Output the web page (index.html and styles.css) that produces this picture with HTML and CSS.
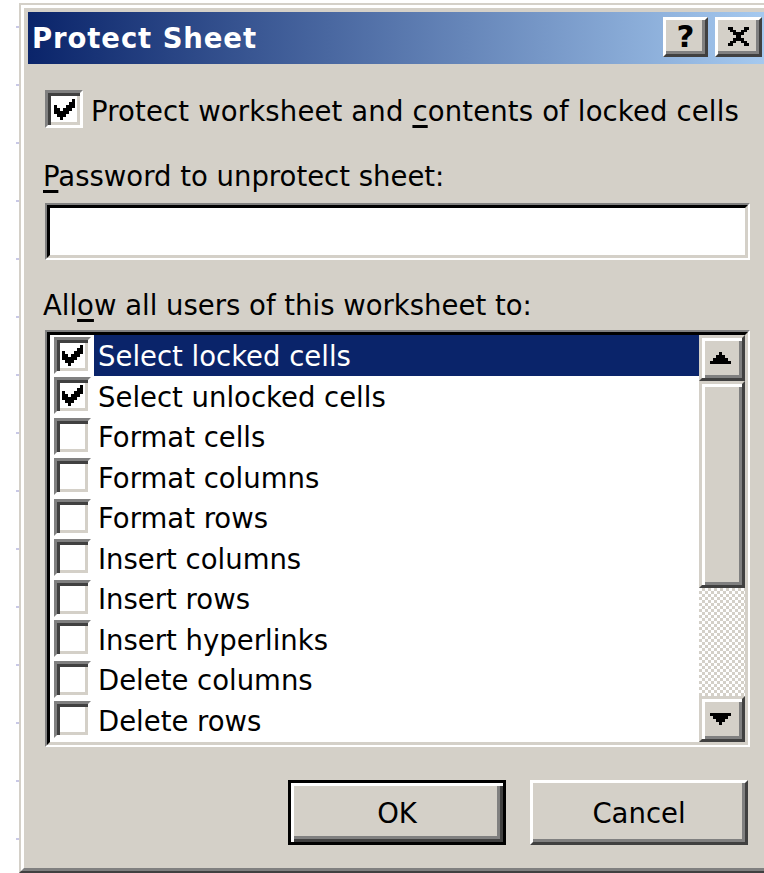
FILE: index.html
```html
<!DOCTYPE html>
<html lang="en">
<head>
<meta charset="utf-8">
<title>Protect Sheet</title>
<link rel="stylesheet" href="styles.css">
</head>
<body>
<div class="gutter"></div>
<div class="dialog">
  <div class="frame">
    <div class="titlebar">
      <span class="title">Protect Sheet</span>
      <div class="caption-buttons">
        <button class="cap-btn help" type="button">?</button>
        <button class="cap-btn close" type="button" aria-label="Close">
          <svg width="23" height="19" viewBox="0 0 8 7" shape-rendering="crispEdges"><path d="M0 0h2v1H0zM6 0h2v1H6zM1 1h2v1H1zM5 1h2v1H5zM2 2h4v1H2zM3 3h2v1H3zM2 4h4v1H2zM1 5h2v1H1zM5 5h2v1H5zM0 6h2v1H0zM6 6h2v1H6z" fill="#000"/></svg>
        </button>
      </div>
    </div>

    <div class="content">
      <div class="check-row">
        <span class="checkbox big">
          <svg class="tick" viewBox="0 0 7 7" shape-rendering="crispEdges"><path d="M6 0h1v1H6zM5 1h2v1H5zM0 2h1v1H0zM4 2h3v1H4zM0 3h2v1H0zM3 3h3v1H3zM0 4h5v1H0zM1 5h3v1H1zM2 6h1v1H2z" fill="#000"/></svg>
        </span>
        <span class="check-label">Protect worksheet and <u>c</u>ontents of locked cells</span>
      </div>

      <div class="field-label password-label"><u>P</u>assword to unprotect sheet:</div>
      <div class="sunken textbox"><div class="sunken-inner"></div></div>

      <div class="field-label allow-label">All<u>o</u>w all users of this worksheet to:</div>
      <div class="sunken listbox">
        <div class="sunken-inner list-inner">
          <ul class="items">
            <li class="item selected"><span class="checkbox small"><svg class="tick" viewBox="0 0 7 7" shape-rendering="crispEdges"><path d="M6 0h1v1H6zM5 1h2v1H5zM0 2h1v1H0zM4 2h3v1H4zM0 3h2v1H0zM3 3h3v1H3zM0 4h5v1H0zM1 5h3v1H1zM2 6h1v1H2z" fill="#000"/></svg></span><span class="item-label">Select locked cells</span></li>
            <li class="item"><span class="checkbox small"><svg class="tick" viewBox="0 0 7 7" shape-rendering="crispEdges"><path d="M6 0h1v1H6zM5 1h2v1H5zM0 2h1v1H0zM4 2h3v1H4zM0 3h2v1H0zM3 3h3v1H3zM0 4h5v1H0zM1 5h3v1H1zM2 6h1v1H2z" fill="#000"/></svg></span><span class="item-label">Select unlocked cells</span></li>
            <li class="item"><span class="checkbox small"></span><span class="item-label">Format cells</span></li>
            <li class="item"><span class="checkbox small"></span><span class="item-label">Format columns</span></li>
            <li class="item"><span class="checkbox small"></span><span class="item-label">Format rows</span></li>
            <li class="item"><span class="checkbox small"></span><span class="item-label">Insert columns</span></li>
            <li class="item"><span class="checkbox small"></span><span class="item-label">Insert rows</span></li>
            <li class="item"><span class="checkbox small"></span><span class="item-label">Insert hyperlinks</span></li>
            <li class="item"><span class="checkbox small"></span><span class="item-label">Delete columns</span></li>
            <li class="item"><span class="checkbox small"></span><span class="item-label">Delete rows</span></li>
          </ul>
          <div class="scrollbar">
            <div class="raised sb-btn">
              <svg width="21" height="12" viewBox="0 0 7 4" shape-rendering="crispEdges"><path d="M3 0h1v1H3zM2 1h3v1H2zM1 2h5v1H1zM0 3h7v1H0z" fill="#000"/></svg>
            </div>
            <div class="raised sb-thumb"></div>
            <div class="sb-track"></div>
            <div class="raised sb-btn">
              <svg width="21" height="12" viewBox="0 0 7 4" shape-rendering="crispEdges"><path d="M0 0h7v1H0zM1 1h5v1H1zM2 2h3v1H2zM3 3h1v1H3z" fill="#000"/></svg>
            </div>
          </div>
        </div>
      </div>

      <div class="actions">
        <button class="btn default" type="button">OK</button>
        <button class="btn" type="button">Cancel</button>
      </div>
    </div>
  </div>
</div>
</body>
</html>
```

FILE: styles.css
```css
html, body {
  margin: 0;
  padding: 0;
  height: 100%;
  overflow: hidden;
  background: #fff;
}

body {
  display: flex;
  align-items: flex-start;
  font-family: "DejaVu Sans", "Noto Sans", sans-serif;
  font-size: 27.5px;
  color: #000;
}

/* faint grid ticks of the sheet behind the dialog */
.gutter {
  flex: none;
  width: 19px;
  align-self: stretch;
  background: linear-gradient(to bottom, transparent 26px, #c9c9e6 26px, #c9c9e6 28px, transparent 28px) 16px 0 / 3px 58px repeat-y;
}

.dialog {
  flex: none;
  width: 758px;
  margin-top: 3px;
  box-sizing: border-box;
  border: 2px solid;
  border-color: #d4d0c8 #404040 #404040 #d4d0c8;
  background: #d4d0c8;
}

.frame {
  border: 3px solid;
  border-color: #fff #808080 #808080 #fff;
  padding: 4px;
}

/* caption */
.titlebar {
  height: 52px;
  display: flex;
  justify-content: space-between;
  align-items: flex-start;
  background: linear-gradient(to right, #0a246a, #a6caf0);
}

.title {
  color: #fff;
  font-weight: bold;
  line-height: 52px;
  padding-left: 4px;
  letter-spacing: 0.9px;
  white-space: nowrap;
}

.caption-buttons {
  display: flex;
  gap: 7px;
  margin-top: 5px;
  margin-right: 6px;
}

.cap-btn {
  height: 40px;
  box-sizing: border-box;
  padding: 0;
  border: 3px solid;
  border-color: #fff #404040 #404040 #fff;
  box-shadow: inset -3px -3px 0 #808080;
  background: #d4d0c8;
  display: flex;
  align-items: center;
  justify-content: center;
  color: #000;
}

.cap-btn.help {
  width: 45px;
  font: bold 31px "DejaVu Sans", sans-serif;
  line-height: 1;
  padding-bottom: 2px;
}

.cap-btn.close {
  width: 47px;
  padding-bottom: 2px;
}

/* body */
.content {
  padding: 26px 18px 19px 17px;
}

.check-row {
  display: flex;
  align-items: flex-start;
  gap: 8px;
  height: 38px;
}

.check-label {
  line-height: 38px;
  padding-top: 2px;
  letter-spacing: 0.15px;
  white-space: nowrap;
}

u {
  text-decoration-thickness: 3px;
  text-underline-offset: 4px;
}

.checkbox {
  flex: none;
  box-sizing: border-box;
  border: 3px solid;
  border-color: #808080 #fff #fff #808080;
  box-shadow: inset 3px 3px 0 #404040, inset -3px -3px 0 #d4d0c8;
  background: #fff;
  display: flex;
  align-items: center;
  justify-content: center;
}

.checkbox.big {
  width: 38px;
  height: 38px;
}

.checkbox.small {
  width: 37px;
  height: 37px;
}

.tick {
  width: 21px;
  height: 21px;
}

.field-label {
  line-height: 32px;
  margin-left: -2px;
  white-space: nowrap;
}

.password-label {
  margin-top: 32px;
}

.allow-label {
  margin-top: 29px;
}

/* sunken edit and list frames */
.sunken {
  box-sizing: border-box;
  border: 2px solid;
  border-color: #808080 #fff #fff #808080;
}

.sunken-inner {
  box-sizing: border-box;
  height: 100%;
  border: 3px solid;
  border-color: #000 #d4d0c8 #d4d0c8 #000;
  background: #fff;
}

.textbox {
  height: 57px;
  margin-top: 11px;
}

.listbox {
  height: 417px;
  margin-top: 9px;
}

.list-inner {
  display: flex;
}

.items {
  flex: 1;
  list-style: none;
  margin: 0;
  padding: 0;
}

.item {
  display: flex;
  align-items: center;
  height: 40.5px;
  padding-left: 4px;
}

.item-label {
  flex: 1;
  align-self: stretch;
  margin-left: 3px;
  padding-left: 4px;
  padding-top: 2px;
  line-height: 38.5px;
  white-space: nowrap;
}

.item.selected .item-label {
  background: #0a246a;
  color: #fff;
}

/* scroll bar */
.scrollbar {
  flex: none;
  width: 46px;
  display: flex;
  flex-direction: column;
}

.raised {
  box-sizing: border-box;
  border: 3px solid;
  border-color: #d4d0c8 #404040 #404040 #d4d0c8;
  box-shadow: inset 3px 3px 0 #fff, inset -3px -3px 0 #808080;
  background: #d4d0c8;
}

.sb-btn {
  height: 46px;
  display: flex;
  align-items: center;
  justify-content: center;
  padding-right: 3px;
}

.sb-thumb {
  height: 207px;
}

.sb-track {
  flex: 1;
  background: conic-gradient(#d4d0c8 25%, #fff 0 50%, #d4d0c8 0 75%, #fff 0) 0 0 / 6px 6px;
}

/* push buttons */
.actions {
  display: flex;
  justify-content: flex-end;
  gap: 24px;
  margin-top: 33px;
  padding-right: 2px;
}

.btn {
  width: 218px;
  height: 65px;
  box-sizing: border-box;
  padding: 0;
  font: inherit;
  color: #000;
  background: #d4d0c8;
  border: 3px solid;
  border-color: #fff #404040 #404040 #fff;
  box-shadow: inset -3px -3px 0 #808080;
}

.btn.default {
  border-color: #000;
  box-shadow: inset 3px 3px 0 #fff, inset -3px -3px 0 #404040, inset -6px -6px 0 #808080;
}
```
